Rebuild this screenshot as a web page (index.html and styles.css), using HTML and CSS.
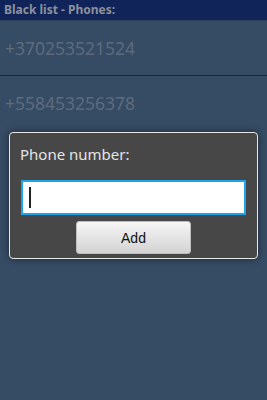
FILE: index.html
```
<!DOCTYPE html>
<html lang="en">
<head>
    <meta charset="UTF-8">
    <meta name="viewport" content="width=device-width, initial-scale=1">
    <title>Black list - Phones</title>
    <link rel="stylesheet" href="styles.css">
</head>
<body>

    <div class="titlebar">Black list - Phones:</div>

    <div class="list">
        <div class="row">+370253521524</div>
        <div class="row">+558453256378</div>
    </div>

    <div class="dialog">
        <div class="label">Phone number:</div>
        <div class="field"><span class="cursor"></span></div>
        <div class="actions">
            <div class="btn">Add</div>
        </div>
    </div>

</body>
</html>
```

FILE: styles.css
```
* {box-sizing: border-box}
html, body {margin: 0; height: 100%}
body {
    font-family: "Noto Sans", "Open Sans", sans-serif;
    background-color: #364b64;
    position: relative;
    overflow: hidden;
}

/* ----- Barre de titre ----- */

.titlebar {
    height: 21px;
    background-color: #10245a;
    border-bottom: 1px solid #2c3d58;
    color: #8c919c;
    font-weight: bold;
    font-size: 12px;
    line-height: 20px;
    padding-left: 4px;
}

/* ----- Liste ----- */

.row {
    height: 55px;
    line-height: 55px;
    padding-left: 5px;
    font-size: 17.5px;
    color: #5d6b7b;
    border-bottom: 1px solid #1b2636;
}
.row:last-child {border-bottom: none}

/* ----- Dialogue ----- */

.dialog {
    position: absolute;
    left: 9px;
    top: 132px;
    width: 249px;
    height: 127px;
    background-color: #474747;
    border: 1px solid #e6e6e6;
    border-radius: 4px;
    box-shadow: 0 0 6px 1px rgba(0, 0, 0, 0.35);
    padding: 10px 10px 0;
}

.label {
    color: #e4e4e4;
    font-size: 15px;
    line-height: 22px;
}

.field {
    margin: 15px 1px 0;
    height: 35px;
    background-color: #fff;
    border: 2px solid #1ea4ec;
    position: relative;
}

.cursor {
    position: absolute;
    left: 6px;
    top: 5px;
    width: 2px;
    height: 21px;
    background-color: #222;
}

.actions {
    display: flex;
    justify-content: center;
    margin-top: 6px;
}

.btn {
    width: 115px;
    height: 33px;
    border-radius: 3px;
    background: linear-gradient(#f6f6f6, #d3d3d3);
    border: 1px solid #bdbdbd;
    color: #111;
    font-family: "Liberation Sans", "Noto Sans", sans-serif;
    font-size: 14px;
    display: flex;
    justify-content: center;
    align-items: center;
}
```
